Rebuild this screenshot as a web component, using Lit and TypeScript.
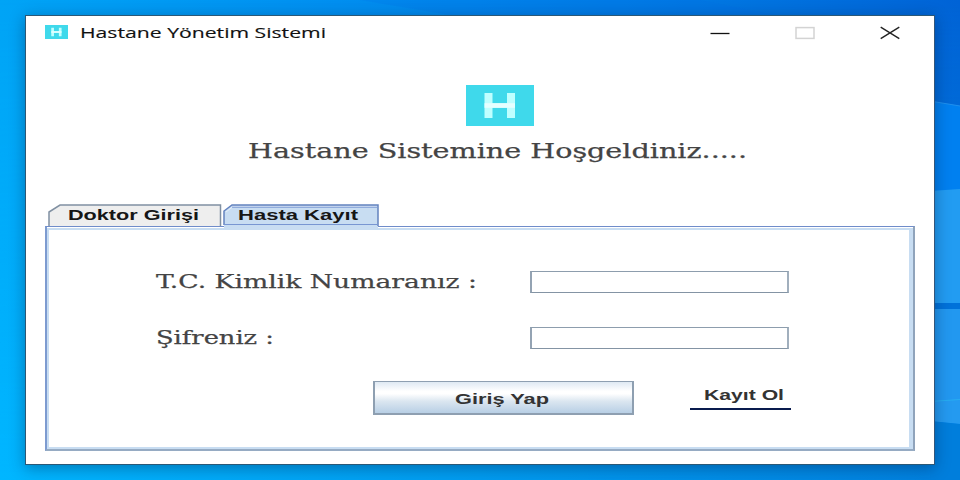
import { LitElement, html, css, svg } from "lit";
import { customElement, property } from "lit/decorators.js";

/** A line of text stretched horizontally to an exact advance width. */
@customElement("wide-text")
class WideText extends LitElement {
  @property() text = "";
  @property({ type: Number }) width = 100;
  @property({ type: Number }) size = 14;
  static styles = css`
    :host { display: block; flex: none; }
    svg { display: block; overflow: visible; }
    text { fill: currentColor; stroke: currentColor; stroke-width: var(--weight, 0); }
  `;
  render() {
    const h = Math.round(this.size);
    return html`<svg width=${this.width} height=${h}>
      <text x="0" y=${h} font-size=${this.size} textLength=${this.width} lengthAdjust="spacingAndGlyphs">${this.text}</text>
    </svg>`;
  }
}

const logo = html`<svg width="100%" height="100%" viewBox="0 0 68 41" preserveAspectRatio="none">
  <rect width="68" height="41" fill="#3fd9eb" />
  <path d="M18.5 8h8v25h-8zM41 8h8v25h-8zM26.5 18.2h14.5v4.6H26.5z" fill="#bfffff" />
  <path d="M18.5 18.2h30.5v4.6H18.5z" fill="#e6ffff" />
</svg>`;

@customElement("app-root")
class AppRoot extends LitElement {
  static styles = css`
    :host {
      display: grid;
      width: 960px;
      height: 480px;
      overflow: hidden;
      font-family: "Liberation Sans", Arial, sans-serif;
      color: #3c3c3c;
    }
    .wallpaper, .window { grid-area: 1 / 1; }
    .wallpaper { display: block; }
    .window {
      box-sizing: border-box;
      width: 910px;
      height: 450px;
      margin: 15px 0 0 25px;
      border: 1px solid #2b5876;
      border-right-color: #34567a;
      background: #fff;
      box-shadow: 0 3px 14px rgba(0, 25, 60, 0.38);
      display: flex;
      flex-direction: column;
    }
    .titlebar { height: 34px; display: flex; align-items: center; padding-left: 19px; }
    .badge { width: 23px; height: 14px; line-height: 0; margin-top: -2px; }
    .title { font-family: "Open Sans", "Noto Sans", sans-serif; color: #111; margin: -4px 0 0 12px; --weight: 0.15px; }
    .controls { margin: -1px 0 0 auto; display: flex; padding-right: 34px; }
    .controls svg { display: block; margin-left: 65px; }
    .intro { height: 154px; display: flex; flex-direction: column; align-items: center; }
    .logo { width: 68px; height: 41px; margin: 35px 0 0 40px; line-height: 0; }
    .welcome, .label { font-family: "DejaVu Serif", serif; color: #444; --weight: 0.25px; }
    .welcome { margin: 12px 0 0 34px; }
    .tabs { display: flex; height: 22px; padding-left: 22px; }
    .tab { display: grid; height: 26px; position: relative; flex: none; }
    .tab svg, .tab wide-text { grid-area: 1 / 1; }
    .tab wide-text { margin: 1px 0 0 20px; font-weight: bold; color: #161616; }
    .tab.second wide-text { margin-left: 15px; }
    .second { z-index: 1; margin-left: 1px; }
    .pane {
      box-sizing: border-box;
      width: 870px;
      height: 225px;
      margin-left: 19px;
      border: solid;
      border-width: 1px 2px 2px 2px;
      border-color: #6f8cca #8fa3bb #96abc3 #7d9bd0;
      padding-top: 1px;
    }
    .sheet {
      box-sizing: border-box;
      height: 221px;
      border: solid #c8ddf2;
      border-width: 2px 4px 2px 2px;
      display: flex;
      flex-direction: column;
      padding: 41px 0 0 107px;
    }
    .row { display: flex; height: 22px; margin-bottom: 34px; }
    .label { width: 374px; margin-top: -1px; }
    .row input {
      box-sizing: border-box;
      width: 259px;
      height: 22px;
      padding: 0 4px;
      outline: none;
      border: 1px solid;
      border-width: 1px 2px 1px 2px;
      border-color: #8d9dad #a1afbd #8494a4 #94a3b3;
      background: #fff;
    }
    .actions { display: flex; margin: -2px 0 0 217px; }
    .login {
      box-sizing: border-box;
      width: 261px;
      height: 34px;
      border: 2px solid #8e9fb1;
      border-top-width: 1px;
      background: linear-gradient(#dfe9f3 0%, #fff 30%, #fff 38%, #dbe6f0 62%, #b8cfe5 100%);
      padding: 7px 0 0 80px;
      font-weight: bold;
      color: #333;
    }
    .register { width: 101px; height: 29px; margin-left: 56px; box-sizing: border-box; padding: 4px 0 0 14px; border-bottom: 2px solid #091b4e; font-weight: bold; color: #333; }
  `;

  private wallpaper() {
    return html`<svg class="wallpaper" width="960" height="480">
      <defs>
        <linearGradient id="base" x1="0" y1="0" x2="1" y2="0">
          <stop offset="0" stop-color="#00a4f6" />
          <stop offset="0.35" stop-color="#008ff0" />
          <stop offset="0.7" stop-color="#007ae4" />
          <stop offset="1" stop-color="#0063d6" />
        </linearGradient>
        <linearGradient id="low" x1="0" y1="0" x2="1" y2="0">
          <stop offset="0" stop-color="#00b6ff" />
          <stop offset="0.5" stop-color="#009cf0" />
          <stop offset="1" stop-color="#0080de" />
        </linearGradient>
        <linearGradient id="fade" x1="0" y1="0" x2="0" y2="1">
          <stop offset="0" stop-color="#fff" stop-opacity="0" />
          <stop offset="1" stop-color="#fff" />
        </linearGradient>
        <mask id="m"><rect width="960" height="480" fill="url(#fade)" /></mask>
      </defs>
      <rect width="960" height="480" fill="url(#base)" />
      <rect width="960" height="480" fill="url(#low)" mask="url(#m)" />
      <path d="M360 0L480 20H800L700 0z" fill="#0070e8" opacity="0.2" />
      <path d="M930 101L960 106V480H930z" fill="#0080f0" />
      <path d="M930 101L960 106" stroke="#1f90ee" />
      <path d="M930 191L960 189V303H930z" fill="#229cf2" />
      <path d="M930 303H960V309H930z" fill="#0072da" />
      <path d="M930 309H960V424L930 421z" fill="#2298f0" />
      <path d="M930 401L960 399V424L930 421z" fill="#249af0" />
      <path d="M930 401.5L960 399.5" stroke="#27aef2" />
      <path d="M930 421L960 424V480H930z" fill="#007edc" />
    </svg>`;
  }

  private tab(cls: string, text: string, width: number, textWidth: number, frame: unknown) {
    return html`<div class="tab ${cls}" role="tab">
      <svg width=${width} height="26">${frame}</svg>
      <wide-text .text=${text} .width=${textWidth} .size=${14.8}></wide-text>
    </div>`;
  }

  render() {
    return html`
      ${this.wallpaper()}
      <main class="window">
        <header class="titlebar">
          <div class="badge">${logo}</div>
          <wide-text class="title" .text=${"Hastane Yönetim Sistemi"} .width=${246} .size=${14.2}></wide-text>
          <div class="controls">
            <svg width="20" height="14"><path d="M0.5 7.5H19.5" stroke="#111" stroke-width="1.3" /></svg>
            <svg width="20" height="14"><rect x="1" y="1.6" width="18" height="10.8" fill="none" stroke="#d3d3d3" stroke-width="1.5" /></svg>
            <svg width="20" height="14"><path d="M0.7 1.2L19.3 12.6M19.3 1.2L0.7 12.6" stroke="#222" stroke-width="1.4" /></svg>
          </div>
        </header>
        <section class="intro">
          <div class="logo">${logo}</div>
          <wide-text class="welcome" .text=${"Hastane Sistemine Hoşgeldiniz....."} .width=${499} .size=${20.4}></wide-text>
        </section>
        <nav class="tabs" role="tablist">
          ${this.tab("first", "Doktor Girişi", 174, 131, svg`
            <path d="M1 22V8L12 1H172.5V22" fill="#eee" stroke="#8090a2" stroke-width="1.5" />`)}
          ${this.tab("second", "Hasta Kayıt", 158, 120, svg`
            <path d="M1 25V7L9 1H155V26H1z" fill="#c8ddf2" />
            <path d="M1 21V7L9 1H155V22" fill="none" stroke="#6382bf" stroke-width="1.5" />
            <path d="M3 8L10 2.5H154" fill="none" stroke="#fff" opacity="0.5" />
            <path d="M9 3.2H154M1 20.5H155" fill="none" stroke="#7896d2" />`)}
        </nav>
        <section class="pane">
          <div class="sheet">
            <div class="row">
              <wide-text class="label" .text=${"T.C. Kimlik Numaranız :"} .width=${321} .size=${17.8}></wide-text>
              <input aria-label="T.C. Kimlik Numaranız" />
            </div>
            <div class="row">
              <wide-text class="label" .text=${"Şifreniz :"} .width=${118} .size=${17.8}></wide-text>
              <input type="password" aria-label="Şifreniz" />
            </div>
            <div class="actions">
              <div class="login" role="button"><wide-text .text=${"Giriş Yap"} .width=${94} .size=${14.5}></wide-text></div>
              <div class="register" role="button"><wide-text .text=${"Kayıt Ol"} .width=${80} .size=${14.5}></wide-text></div>
            </div>
          </div>
        </section>
      </main>
    `;
  }
}
